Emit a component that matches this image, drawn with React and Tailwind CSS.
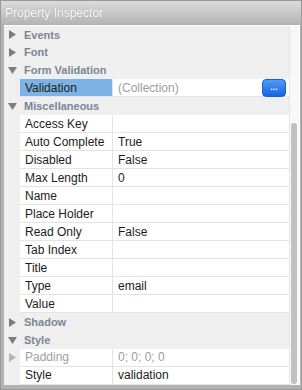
import React from "react";

const Triangle = ({ open, light }) => (
  <svg width="9" height="9" viewBox="0 0 9 9" className="block">
    {open ? (
      <polygon points="0,1 9,1 4.5,8" fill={light ? "#b5b5b5" : "#7d7d7d"} />
    ) : (
      <polygon points="1,0 8,4.5 1,9" fill={light ? "#b5b5b5" : "#7d7d7d"} />
    )}
  </svg>
);

const Category = ({ label, open }) => (
  <div className="flex h-[18px] items-center bg-[#efefef]">
    <div className="flex w-[16px] justify-center">
      <Triangle open={open} />
    </div>
    <span className="pl-[4px] text-[11px] font-bold text-[#7b8594]">{label}</span>
  </div>
);

const Prop = ({ name, value, selected, muted, expandable, button }) => (
  <div className="flex h-[18px] bg-[#efefef]">
    <div className="flex w-[16px] items-center justify-center">
      {expandable && <Triangle light />}
    </div>
    <div
      className={`flex w-[93px] items-center border-b border-r border-[#e3e3e3] pl-[5px] text-[12px] ${
        selected ? "bg-[#7cb2e4]" : "bg-white"
      } ${muted ? "text-[#a0a0a0]" : "text-[#1c1c1c]"}`}
    >
      {name}
    </div>
    <div
      className={`flex flex-1 items-center justify-between border-b border-[#e3e3e3] bg-white pl-[5px] text-[12px] ${
        muted || selected ? "text-[#9d9d9d]" : "text-[#1c1c1c]"
      }`}
    >
      <span>{value}</span>
      {button && (
        <div className="mr-[3px] flex h-[18px] w-[24px] items-end justify-center rounded-[4px] border border-[#1d5ed4] bg-gradient-to-b from-[#4d9cf9] to-[#1a62e2] pb-[4px] text-[9px] font-bold leading-none text-white">
          ...
        </div>
      )}
    </div>
  </div>
);

export default function App() {
  return (
    <div
      className="flex h-[390px] w-[302px] flex-col border border-[#9a9a9a] bg-[#b2b2b2]"
      style={{ fontFamily: '"Liberation Sans", Arial, sans-serif' }}
    >
      <div className="flex h-[23px] items-center bg-gradient-to-b from-[#dbdbdb] to-[#b5b5b5] pl-[4px] text-[12px] text-white [text-shadow:0_0_1px_rgba(0,0,0,0.3)]">
        Property Inspector
      </div>
      <div className="mb-[4px] ml-[3px] mr-[1px] mt-[1px] flex flex-1 overflow-hidden border-t border-white bg-[#efefef]">
        <div className="flex w-[285px] flex-col">
          <Category label="Events" />
          <Category label="Font" />
          <Category label="Form Validation" open />
          <Prop name="Validation" value="(Collection)" selected button />
          <Category label="Miscellaneous" open />
          <Prop name="Access Key" value="" />
          <Prop name="Auto Complete" value="True" />
          <Prop name="Disabled" value="False" />
          <Prop name="Max Length" value="0" />
          <Prop name="Name" value="" />
          <Prop name="Place Holder" value="" />
          <Prop name="Read Only" value="False" />
          <Prop name="Tab Index" value="" />
          <Prop name="Title" value="" />
          <Prop name="Type" value="email" />
          <Prop name="Value" value="" />
          <Category label="Shadow" />
          <Category label="Style" open />
          <Prop name="Padding" value="0; 0; 0; 0" muted expandable />
          <Prop name="Style" value="validation" />
        </div>
        <div className="flex w-[10px] flex-col border-l border-[#e6e6e6] bg-[#f8f8f8] pt-[97px] pb-[1px]">
          <div className="ml-[1px] w-[6px] flex-1 rounded-full bg-[#c1c1c1]" />
        </div>
        <div className="w-[1px] bg-white" />
      </div>
    </div>
  );
}
